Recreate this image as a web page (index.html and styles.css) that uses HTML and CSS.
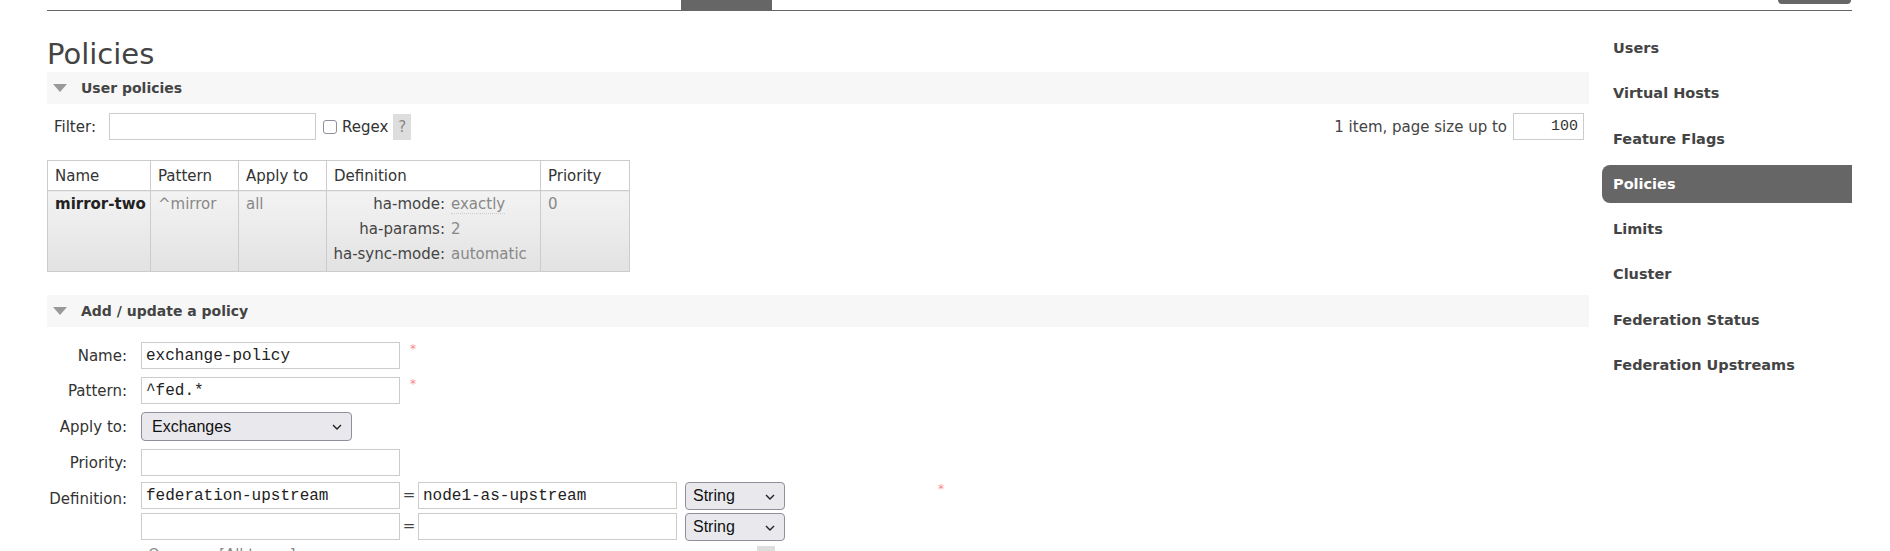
FILE: index.html
```html
<!DOCTYPE html>
<html lang="en">
<head>
    <meta charset="UTF-8">
    <title>Policies</title>
    <link rel="stylesheet" href="styles.css">
</head>
<body>
    <div class="topbar">
        <span class="tab-selected"></span>
        <span class="logout"></span>
    </div>

    <div class="page">
        <div class="main">
            <h1>Policies</h1>

            <div class="section">
                <h2 class="section-title"><span class="arrow"></span>User policies</h2>
                <div class="filter-row">
                    <div class="filter">
                        <label class="filter-label">Filter:</label>
                        <input type="text" class="filter-input">
                        <input type="checkbox" class="check">
                        <label class="regex-label">Regex</label>
                        <span class="help">?</span>
                    </div>
                    <div class="paging">
                        1 item, page size up to
                        <input type="text" class="page-size" value="100">
                    </div>
                </div>

                <table class="list">
                    <colgroup>
                        <col style="width: 103px">
                        <col style="width: 88px">
                        <col style="width: 88px">
                        <col style="width: 214px">
                        <col style="width: 89px">
                    </colgroup>
                    <thead>
                        <tr>
                            <th>Name</th>
                            <th>Pattern</th>
                            <th>Apply to</th>
                            <th>Definition</th>
                            <th>Priority</th>
                        </tr>
                    </thead>
                    <tbody>
                        <tr>
                            <td class="name">mirror-two</td>
                            <td class="muted">^mirror</td>
                            <td class="muted">all</td>
                            <td class="definition">
                                <table class="mini">
                                    <tr><td class="key">ha-mode:</td><td class="val"><abbr>exactly</abbr></td></tr>
                                    <tr><td class="key">ha-params:</td><td class="val">2</td></tr>
                                    <tr><td class="key">ha-sync-mode:</td><td class="val">automatic</td></tr>
                                </table>
                            </td>
                            <td class="muted">0</td>
                        </tr>
                    </tbody>
                </table>
            </div>

            <div class="section section-add">
                <h2 class="section-title"><span class="arrow"></span>Add / update a policy</h2>
                <table class="form">
                    <tr>
                        <th>Name:</th>
                        <td><input type="text" class="field" value="exchange-policy"><span class="mand">*</span></td>
                    </tr>
                    <tr>
                        <th>Pattern:</th>
                        <td><input type="text" class="field" value="^fed.*"><span class="mand">*</span></td>
                    </tr>
                    <tr>
                        <th>Apply to:</th>
                        <td>
                            <span class="select select-apply">Exchanges<svg class="chevron" width="10" height="6" viewBox="0 0 10 6"><path d="M1 1 L5 5 L9 1" fill="none" stroke="#222" stroke-width="1.4"/></svg></span>
                        </td>
                    </tr>
                    <tr>
                        <th>Priority:</th>
                        <td><input type="text" class="field"></td>
                    </tr>
                    <tr>
                        <th class="top">Definition:</th>
                        <td class="def-cell">
                            <div class="multifield">
                                <div class="mf-row">
                                    <input type="text" class="field" value="federation-upstream">
                                    <span class="eq">=</span>
                                    <input type="text" class="field" value="node1-as-upstream">
                                    <span class="select select-type">String<svg class="chevron" width="10" height="6" viewBox="0 0 10 6"><path d="M1 1 L5 5 L9 1" fill="none" stroke="#222" stroke-width="1.4"/></svg></span>
                                    <span class="mand mand-far">*</span>
                                </div>
                                <div class="mf-row">
                                    <input type="text" class="field">
                                    <span class="eq">=</span>
                                    <input type="text" class="field">
                                    <span class="select select-type">String<svg class="chevron" width="10" height="6" viewBox="0 0 10 6"><path d="M1 1 L5 5 L9 1" fill="none" stroke="#222" stroke-width="1.4"/></svg></span>
                                </div>
                                <div class="hints">
                                    <span class="hint-title">Queues</span>
                                    <span class="hint-kind">[All types]</span>
                                    <span class="help help-hint">?</span>
                                </div>
                            </div>
                        </td>
                    </tr>
                </table>
            </div>
        </div>

        <div class="rhs">
            <ul>
                <li><a href="#">Users</a></li>
                <li><a href="#">Virtual Hosts</a></li>
                <li><a href="#">Feature Flags</a></li>
                <li><a href="#" class="selected">Policies</a></li>
                <li><a href="#">Limits</a></li>
                <li><a href="#">Cluster</a></li>
                <li><a href="#">Federation Status</a></li>
                <li><a href="#">Federation Upstreams</a></li>
            </ul>
        </div>
    </div>
</body>
</html>
```

FILE: styles.css
```css
body {
    margin: 0;
    background-color: #fff;
    color: #333;
    font-family: "DejaVu Sans", Verdana, sans-serif;
    font-size: 15px;
    overflow: hidden;
}

/* Top menu strip */
.topbar {
    display: flex;
    align-items: flex-start;
    height: 10px;
    margin: 0 38px 0 47px;
    border-bottom: 1px solid #666;
}
.tab-selected {
    width: 91px;
    height: 10px;
    margin-left: 634px;
    background-color: #666;
}
.logout {
    width: 73px;
    height: 4px;
    margin-left: auto;
    margin-right: 1px;
    background-color: #666;
    border-radius: 0 0 5px 5px;
}

.page {
    display: flex;
    width: 1805px;
    padding-left: 47px;
}
.main {
    width: 1542px;
}

h1 {
    margin: 26px 0 0;
    font-size: 29px;
    line-height: 35px;
    font-weight: normal;
    color: #444;
}

.section-title {
    display: flex;
    align-items: center;
    height: 32px;
    margin: 0;
    padding-left: 7px;
    background-color: #f7f7f7;
    color: #444;
    font-size: 14px;
    font-weight: bold;
}
.arrow {
    width: 0;
    height: 0;
    margin-left: -1px;
    margin-right: 14px;
    border-left: 7px solid transparent;
    border-right: 7px solid transparent;
    border-top: 8px solid #999;
}

/* Filter row */
.filter-row {
    display: flex;
    justify-content: space-between;
    align-items: center;
    height: 27px;
    margin-top: 9px;
}
.filter {
    display: flex;
    align-items: center;
}
.filter-label {
    margin-left: 7px;
    margin-right: 13px;
}
.filter-input {
    width: 207px;
    height: 27px;
    box-sizing: border-box;
    border: 1px solid #ccc;
    margin: 0 7px 0 0;
}
.check {
    appearance: none;
    width: 14px;
    height: 14px;
    margin: 0 5px 0 0;
    border: 1px solid #8f8f9d;
    border-radius: 3px;
    background-color: #fff;
}
.regex-label {
    margin-right: 5px;
}
.help {
    display: inline-block;
    width: 18px;
    height: 26px;
    line-height: 26px;
    text-align: center;
    background-color: #ddd;
    color: #888;
}
.paging {
    display: flex;
    align-items: center;
    color: #444;
}
.page-size {
    width: 71px;
    height: 27px;
    box-sizing: border-box;
    margin: 0 5px 0 6px;
    padding: 0 5px;
    border: 1px solid #ccc;
    text-align: right;
    font-family: "Liberation Mono", monospace;
    font-size: 15px;
    color: #333;
}

/* Policies list */
table.list {
    margin-top: 20px;
    border-collapse: collapse;
    table-layout: fixed;
    width: 583px;
    border: 1px solid #ccc;
}
table.list th {
    height: 29px;
    padding: 0 6px 0 7px;
    border: 1px solid #ccc;
    background-color: #fff;
    text-align: left;
    font-weight: normal;
    color: #333;
}
table.list td {
    height: 76px;
    padding: 4px 6px 0 7px;
    border: 1px solid #ccc;
    border-top: none;
    background: linear-gradient(#f3f3f3, #e2e2e2);
    vertical-align: top;
    line-height: 18px;
    white-space: nowrap;
}
table.list td.name {
    font-weight: bold;
    color: #222;
}
table.list td.muted {
    color: #888;
}
table.list td.definition {
    padding: 0 2px;
}
table.mini {
    border-collapse: collapse;
}
table.mini td {
    height: 25px;
    padding: 0;
    border: none;
    background: none;
    vertical-align: middle;
}
table.mini td.key {
    width: 116px;
    padding-right: 6px;
    text-align: right;
    color: #444;
}
table.mini td.val {
    color: #888;
}
abbr {
    text-decoration: none;
    border-bottom: 1px dotted #ccc;
}

/* Add / update form */
.section-add {
    margin-top: 23px;
}
table.form {
    margin-top: 11px;
    border-collapse: collapse;
}
table.form th {
    width: 80px;
    padding: 0 14px 0 0;
    text-align: right;
    font-weight: normal;
    color: #333;
    white-space: nowrap;
}
table.form th.top {
    vertical-align: top;
    padding-top: 10px;
}
table.form td {
    padding: 4px 0;
    white-space: nowrap;
}
table.form td.def-cell {
    padding-top: 2px;
}
.field {
    width: 259px;
    height: 27px;
    box-sizing: border-box;
    margin: 0;
    padding: 0 4px;
    border: 1px solid #ccc;
    font-family: "Liberation Mono", monospace;
    font-size: 16px;
    color: #222;
    vertical-align: top;
}
.mand {
    display: inline-block;
    margin-left: 10px;
    color: #f88;
    font-size: 12px;
    vertical-align: top;
    line-height: 14px;
}
.mand-far {
    margin-left: 153px;
}
.select {
    position: relative;
    display: inline-flex;
    align-items: center;
    box-sizing: border-box;
    height: 28px;
    border: 1px solid #8f8f9d;
    border-radius: 4px;
    background-color: #e9e9ed;
    font-family: "Liberation Sans", Arial, sans-serif;
    font-size: 16px;
    color: #111;
    vertical-align: top;
}
.select-apply {
    width: 211px;
    height: 29px;
    padding-left: 10px;
}
.select-type {
    width: 100px;
    margin-left: 8px;
    padding-left: 7px;
}
.chevron {
    position: absolute;
    right: 9px;
    top: 11px;
}
.multifield {
    display: flex;
    flex-direction: column;
    gap: 3px;
}
.mf-row {
    display: flex;
    align-items: flex-start;
}
.eq {
    width: 18px;
    line-height: 27px;
    text-align: center;
    color: #444;
}
.hints {
    display: flex;
    align-items: flex-start;
    width: 634px;
    height: 20px;
    margin-top: 2px;
    color: #888;
}
.hint-title {
    margin-left: 7px;
    margin-right: 14px;
}
.help-hint {
    margin-left: auto;
    height: 20px;
}

/* Right hand menu */
.rhs {
    width: 250px;
    margin-left: 13px;
}
.rhs ul {
    list-style: none;
    margin: 18px 0 0;
    padding: 0;
}
.rhs li {
    margin-bottom: 7.3px;
}
.rhs a {
    display: block;
    height: 38px;
    line-height: 38px;
    padding-left: 11px;
    border-radius: 8px 0 0 8px;
    color: #444;
    font-size: 14.5px;
    font-weight: bold;
    text-decoration: none;
}
.rhs a.selected {
    background-color: #666;
    color: #fff;
}
```
